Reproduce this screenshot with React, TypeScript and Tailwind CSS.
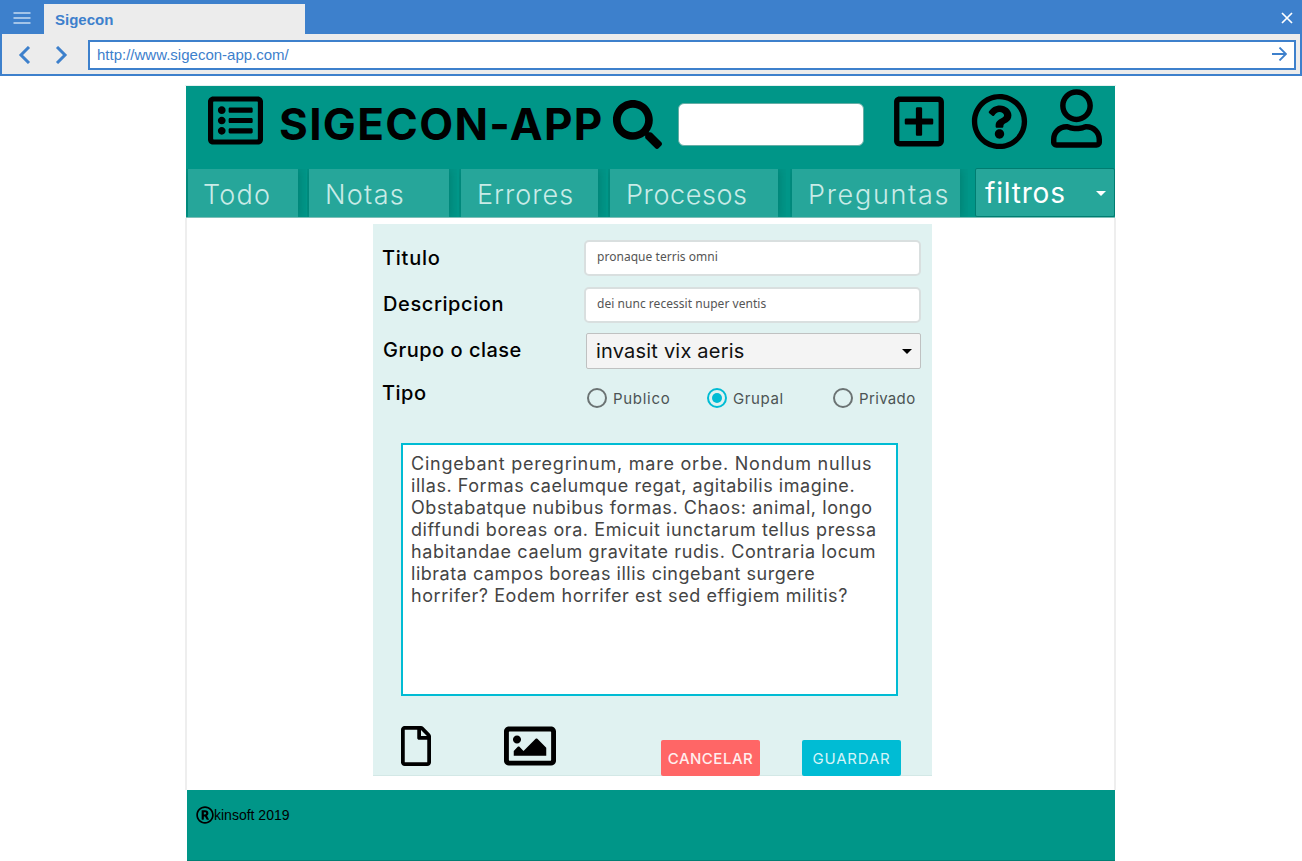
import React from "react";
import {
  FaRegListAlt,
  FaSearch,
  FaRegPlusSquare,
  FaRegQuestionCircle,
  FaRegUser,
  FaRegFile,
  FaRegImage,
  FaRegRegistered,
} from "react-icons/fa";

const tabs = [
  { label: "Todo", box: "w-[110px] mr-[11px] pl-[15px]", text: "tracking-[1.2px]" },
  { label: "Notas", box: "w-[140px] mr-[12px] pl-[16px]", text: "tracking-[1.3px]" },
  { label: "Errores", box: "w-[137px] mr-[12px] pl-[16px]", text: "tracking-[1px]" },
  { label: "Procesos", box: "w-[168px] mr-[14px] pl-[16px]", text: "tracking-[0.6px]" },
  { label: "Preguntas", box: "w-[168px] mr-[15px] pl-[16px]", text: "tracking-[1.7px]" },
];

const lines = [
  { text: "Cingebant peregrinum, mare orbe. Nondum nullus", track: "tracking-[0.77px]" },
  { text: "illas. Formas caelumque regat, agitabilis imagine.", track: "tracking-[0.55px]" },
  { text: "Obstabatque nubibus formas. Chaos: animal, longo", track: "tracking-[0.56px]" },
  { text: "diffundi boreas ora. Emicuit iunctarum tellus pressa", track: "tracking-[0.57px]" },
  { text: "habitandae caelum gravitate rudis. Contraria locum", track: "tracking-[0.62px]" },
  { text: "librata campos boreas illis cingebant surgere", track: "tracking-[0.52px]" },
  { text: "horrifer? Eodem horrifer est sed effigiem militis?", track: "tracking-[0.56px]" },
];

function BrowserBar() {
  return (
    <div className="h-[76px] bg-[#3d80cc] px-[2px] pb-[2px] font-['Liberation_Sans',sans-serif] text-[#3d80cc]">
      <div className="flex h-[34px] items-end">
        <svg className="mb-[8px] ml-[11px] h-[16px] w-[18px]" viewBox="0 0 18 16" stroke="#a3c4e8" strokeWidth="1.8">
          <path d="M.5 3h17M.5 8h17M.5 13h17" />
        </svg>
        <div className="ml-[13px] h-[30px] w-[261px] bg-[#ececec] pl-[11px] text-[15px] leading-[32px] font-bold">
          Sigecon
        </div>
        <svg className="mr-[7px] mb-[10px] ml-auto h-[12px] w-[12px]" viewBox="0 0 12 12" stroke="#fff" strokeWidth="1.7">
          <path d="M1 1l10 10M11 1L1 11" />
        </svg>
      </div>
      <div className="flex h-[40px] items-start bg-[#ececec] pt-[6px]">
        <svg className="mt-[6px] ml-[16px] h-[18px] w-[50px]" viewBox="0 0 50 18" fill="none" stroke="#3d80cc" strokeWidth="3">
          <path d="M11 1L3 9l8 8M39 1l8 8-8 8" />
        </svg>
        <div className="ml-[20px] flex h-[30px] w-[1208px] items-center justify-between border-2 border-[#3d80cc] bg-white pr-[7px] pl-[7px] text-[15px]">
          <span>http://www.sigecon-app.com/</span>
          <svg className="mb-[2px] h-[14px] w-[15px]" viewBox="0 0 15 14" fill="none" stroke="#3d80cc" strokeWidth="1.8">
            <path d="M0 7h14M7.5.5L14 7l-6.5 6.5" />
          </svg>
        </div>
      </div>
    </div>
  );
}

function Header() {
  return (
    <header className="w-[929px] border-b border-[#7fbfb8] bg-[#009688]">
      <div className="flex h-[82px] items-start">
        <FaRegListAlt className="mt-[7px] ml-[22px] h-[55px] w-[55px] shrink-0" />
        <h1 className="mt-[13px] ml-[16px] w-[334px] shrink-0 text-[44px] leading-[50px] font-bold whitespace-nowrap tracking-[1.35px]">
          SIGECON-APP
        </h1>
        <FaSearch className="mt-[14px] h-[49px] w-[49px] shrink-0" />
        <div className="mt-[17px] ml-[16px] h-[43px] w-[186px] shrink-0 rounded-[6px] border border-[#66aea6] bg-white" />
        <FaRegPlusSquare className="mt-[7px] ml-[30px] h-[57px] w-[50px] shrink-0" />
        <FaRegQuestionCircle className="mt-[7px] ml-[27px] h-[57px] w-[57px] shrink-0" />
        <FaRegUser className="mt-[3px] ml-[23px] h-[59px] w-[51px] shrink-0" />
      </div>
      <nav className="flex h-[49px] pl-[2px]">
        {tabs.map((t) => (
          <div
            key={t.label}
            className={`mt-px h-[48px] shrink-0 bg-[#26a69a] text-[27px] leading-[51px] font-light whitespace-nowrap text-[#c9ebe7] shadow-[0_0_10px_rgba(0,77,64,0.4)] [clip-path:inset(0_-8px_0_-2px)] ${t.box} ${t.text}`}
          >
            {t.label}
          </div>
        ))}
        <div className="flex h-[49px] w-[140px] shrink-0 items-center justify-between rounded-[2px] border border-[#007d71] bg-[#26a69a] pr-[8px] pl-[9px] text-[28px] text-white">
          <span className="tracking-[0.8px]">filtros</span>
          <svg className="mt-[2px] h-[5px] w-[10px]" viewBox="0 0 10 5" fill="#fff">
            <path d="M0 0h10L5 5z" />
          </svg>
        </div>
      </nav>
    </header>
  );
}

function Radio({
  label,
  checked,
  className,
  track,
}: {
  label: string;
  checked?: boolean;
  className: string;
  track: string;
}) {
  return (
    <div className={`flex shrink-0 items-center gap-[6px] text-[15px] text-[#4c5454] ${className}`}>
      <svg className="h-[20px] w-[20px]" viewBox="0 0 20 20">
        <circle cx="10" cy="10" r="9" fill="none" strokeWidth="2" stroke={checked ? "#00bcd4" : "#6b7373"} />
        {checked && <circle cx="10" cy="10" r="5" fill="#00bcd4" />}
      </svg>
      <span className={`pt-[2px] ${track}`}>{label}</span>
    </div>
  );
}

function Form() {
  const label = "w-[202px] shrink-0 text-[20px] leading-[24px] font-medium whitespace-nowrap";
  const input =
    "h-[36px] w-[337px] rounded-[5px] border-2 border-[#d9dfdf] bg-white pl-[11px] font-['Noto_Sans',sans-serif] text-[12px] leading-[30px] tracking-[0.04px] text-[#555]";
  return (
    <main className="mt-[6px] ml-[186px] h-[552px] w-[559px] border-b border-[#d3e8e6] bg-[#e0f2f1] pt-[16px] pl-[10px]">
      <div className="flex h-[47px]">
        <div className={`${label} mt-[6px] ml-[-1px] tracking-[0.75px]`}>Titulo</div>
        <div className={input}>pronaque terris omni</div>
      </div>
      <div className="flex h-[46px]">
        <div className={`${label} mt-[5px] tracking-[0.6px]`}>Descripcion</div>
        <div className={`${input} ml-[-1px]`}>dei nunc recessit nuper ventis</div>
      </div>
      <div className="flex h-[47px]">
        <div className={`${label} mt-[5px] tracking-[0.5px]`}>Grupo o clase</div>
        <div className="ml-px flex h-[36px] w-[335px] items-center justify-between rounded-[2px] border border-[#bfc1c1] bg-[#f4f4f4] pr-[8px] pl-[9px] text-[20px] text-[#111]">
          <span className="tracking-[0.2px]">invasit vix aeris</span>
          <svg className="h-[5px] w-[10px]" viewBox="0 0 10 5">
            <path d="M0 0h10L5 5z" />
          </svg>
        </div>
      </div>
      <div className="flex h-[63px]">
        <div className={`${label} mt-px ml-[-1px] tracking-[0.5px]`}>Tipo</div>
        <div className="ml-[3px] flex h-[36px]">
          <Radio label="Publico" className="w-[120px]" track="tracking-[0.7px]" />
          <Radio label="Grupal" checked className="w-[126px]" track="tracking-[0.6px]" />
          <Radio label="Privado" className="w-[90px]" track="tracking-[0.35px]" />
        </div>
      </div>
      <div className="ml-[18px] h-[253px] w-[497px] border-2 border-[#00bcd4] bg-white pt-[8px] pl-[8px] text-[18px] leading-[22px] text-[#444]">
        {lines.map((l) => (
          <div key={l.text} className={`whitespace-nowrap ${l.track}`}>
            {l.text}
          </div>
        ))}
      </div>
      <div className="flex h-[80px] items-start pl-[18px]">
        <FaRegFile className="mt-[30px] h-[40px] w-[30px]" />
        <FaRegImage className="mt-[24px] ml-[73px] h-[52px] w-[52px]" />
        <button className="mt-[44px] ml-[105px] h-[36px] w-[99px] rounded-[2px] bg-[#ff6666] pt-[2px] text-[15px] font-medium whitespace-nowrap tracking-[0.5px] text-[#ffeeee]">
          CANCELAR
        </button>
        <button className="mt-[44px] ml-[42px] h-[36px] w-[99px] rounded-[2px] bg-[#00bcd4] pt-[2px] text-[15px] whitespace-nowrap tracking-[0.8px] text-[#d5f4f8]">
          GUARDAR
        </button>
      </div>
    </main>
  );
}

export default function App() {
  return (
    <div className="h-[861px] w-[1302px] overflow-hidden bg-white font-['Inter',sans-serif] text-black">
      <BrowserBar />
      <div className="mt-[9px] ml-[185px] h-[776px] w-[931px]">
        <div className="border-t border-[#e4f1f0] pl-px">
          <Header />
        </div>
        <div className="flow-root h-[572px] border-x-2 border-[#eee]">
          <Form />
        </div>
        <footer className="ml-[2px] flex h-[71px] w-[928px] items-start border-b border-[#007f73] bg-[#009688] pt-[16px] pl-[9px] font-['Liberation_Sans',sans-serif] text-[14px] leading-[18px]">
          <FaRegRegistered className="h-[18px] w-[18px]" />
          <span>kinsoft 2019</span>
        </footer>
      </div>
    </div>
  );
}
